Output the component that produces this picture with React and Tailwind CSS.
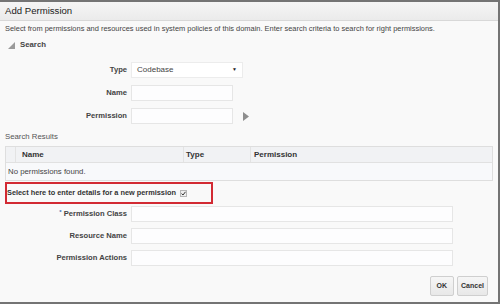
export default function App() {
  return (
    <div className="w-[500px] h-[304px] bg-[#f9f9f9] border-t-2 border-r-2 border-b-2 border-[#747474] font-['Liberation_Sans',Arial,sans-serif] text-[#333] overflow-hidden">
      <div className="h-[19px] bg-gradient-to-b from-[#f5f5f5] to-[#ebebeb] border-b border-[#d8d8d8] px-[5px] flex items-center text-[9.6px] text-[#222]">
        Add Permission
      </div>

      <div className="px-[5px]">
        <div className="mt-[3px] h-[10px] leading-[10px] text-[7.45px] text-[#444]">
          Select from permissions and resources used in system policies of this domain. Enter search criteria to search for right permissions.
        </div>
        <div className="mt-[6px] h-[10px] flex items-center gap-[5px] pl-[3px]">
          <svg width="7" height="7" viewBox="0 0 7 7">
            <path d="M7 0 L7 7 L0 7 Z" fill="#9a9a9a" />
          </svg>
          <span className="text-[7.8px] font-bold text-[#444]">Search</span>
        </div>

        <div className="mt-[12px] flex flex-col gap-[7px]">
          <Row label="Type">
            <div className="w-[112px] h-[16px] bg-white border border-[#ececec] flex items-center justify-between px-[5px] text-[8px] text-[#444]">
              <span>Codebase</span>
              <span className="text-[5px] text-[#222]">▼</span>
            </div>
          </Row>
          <Row label="Name">
            <Field w="w-[102px]" />
          </Row>
          <Row label="Permission">
            <Field w="w-[102px]" />
            <svg width="6" height="9" viewBox="0 0 6 9" className="ml-[10px]">
              <path d="M0 0 L6 4.5 L0 9 Z" fill="#8e8e8e" />
            </svg>
          </Row>
        </div>

        <div className="mt-[8px] h-[10px] leading-[10px] text-[7.8px] text-[#555]">Search Results</div>

        <div className="mt-[4px] w-[488px] border border-[#dedede] bg-[#f8f9fb]">
          <div className="h-[16px] flex bg-[#f1f2f4] border-b border-[#e1e1e1] text-[8px] font-bold text-[#333]">
            <div className="w-[10px] border-r border-[#e3e3e3]" />
            <div className="w-[168px] border-r border-[#e3e3e3] flex items-center pl-[6px]">Name</div>
            <div className="w-[67px] border-r border-[#e3e3e3] flex items-center pl-[2px]">Type</div>
            <div className="flex-1 flex items-center pl-[3px]">Permission</div>
          </div>
          <div className="h-[17px] flex items-center pl-[2px] text-[7.8px] text-[#444]">No permissions found.</div>
        </div>

        <div className="mt-[1px] w-[208px] h-[22px] border-2 border-[#d22a33] flex items-center gap-[4px] text-[7.35px] font-bold text-[#333]">
          <span>Select here to enter details for a new permission</span>
          <span className="w-[7px] h-[7px] border border-[#b5b5b5] bg-[#eee] flex items-center justify-center">
            <svg width="5" height="5" viewBox="0 0 5 5">
              <path d="M0.5 2.6 L2 4 L4.5 0.8" stroke="#333" strokeWidth="1" fill="none" />
            </svg>
          </span>
        </div>

        <div className="mt-[2px] flex flex-col gap-[6px]">
          <Row label="Permission Class" star>
            <Field w="w-[322px]" />
          </Row>
          <Row label="Resource Name">
            <Field w="w-[322px]" />
          </Row>
          <Row label="Permission Actions">
            <Field w="w-[322px]" />
          </Row>
        </div>

        <div className="mt-[10px] flex justify-end gap-[3px] pr-[5px]">
          <Btn className="px-[6px]">OK</Btn>
          <Btn className="px-[3px]">Cancel</Btn>
        </div>
      </div>
    </div>
  )
}

function Row({ label, star, children }) {
  return (
    <div className="flex items-center h-[16px]">
      <div className="w-[126px] text-right text-[7.6px] font-bold text-[#444] pr-[4px]">
        {star && <span className="text-[#3a6fb5] mr-[2px] align-top text-[6px]">*</span>}
        {label}
      </div>
      {children}
    </div>
  )
}

function Field({ w }) {
  return <div className={`${w} h-[16px] bg-[#fdfdfe] border border-[#e6e6e6]`} />
}

function Btn({ className, children }) {
  return (
    <div className={`${className} h-[20px] flex items-center bg-gradient-to-b from-[#f6f6f6] to-[#e8e8e8] border border-[#cfcfcf] rounded-[2px] text-[7px] font-bold text-[#333]`}>
      {children}
    </div>
  )
}
